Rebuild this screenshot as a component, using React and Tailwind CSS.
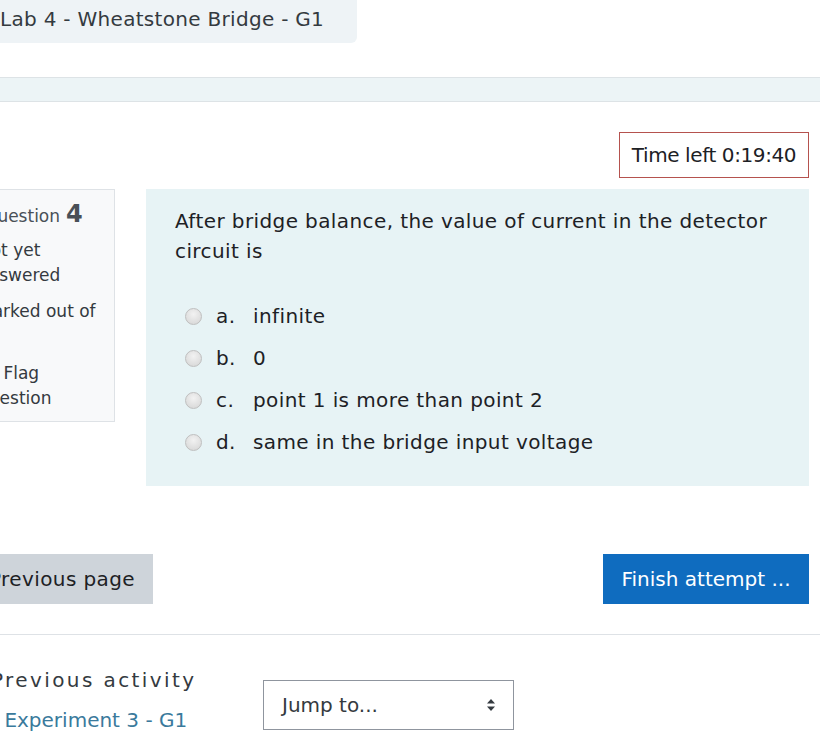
import React from "react";

function Radio() {
  return (
    <span className="inline-block w-[17px] h-[17px] rounded-full border border-[#bfbfbf] bg-[radial-gradient(circle_at_50%_35%,#f2f2f2,#d4d4d4)] shrink-0" />
  );
}

function Option({ letter, text }) {
  return (
    <div className="h-[42px] flex items-center">
      <div className="w-[10px] shrink-0" />
      <Radio />
      <span className="ml-[14px] w-[37px] shrink-0">{letter}</span>
      <span>{text}</span>
    </div>
  );
}

export default function App() {
  return (
    <div className="w-[820px] h-[742px] overflow-hidden bg-white text-[#1d2125] font-['DejaVu_Sans',sans-serif] text-[20px] leading-[30px]">
      {/* Title tab */}
      <div className="ml-[-24px] w-[381px] h-[43px] bg-[#eef3f6] rounded-br-[6px] flex items-center pl-[24px] text-[#343a40] tracking-[0.015em]">
        <span className="mt-[-5px]">Lab 4 - Wheatstone Bridge - G1</span>
      </div>

      {/* band */}
      <div className="mt-[34px] h-[25px] bg-[#ecf4f6] border-y border-[#dde3e6]" />

      {/* timer */}
      <div className="flex justify-end pr-[11px] mt-[30px]">
        <div className="h-[46px] w-[190px] border border-[#b5524e] flex items-center justify-center tracking-[-0.02em]">
          Time left 0:19:40
        </div>
      </div>

      {/* question row */}
      <div className="flex items-start mt-[11px] ml-[-30px]">
        <div className="w-[145px] h-[233px] shrink-0 bg-[#f8f9fa] border border-[#dee2e6] pl-[7px] pr-[4px] pt-[12px] text-[17px] leading-[25px] text-[#343a40]">
          <div className="flex items-baseline pl-[6px]">
            <span className="text-[#495057]">Question</span>
            <span className="ml-[6px] text-[24px] font-bold text-[#495057]">4</span>
          </div>
          <div className="mt-[9px]">
            Not yet
            <br />
            answered
          </div>
          <div className="mt-[11px]">
            Marked out of
            <br />
            &nbsp;
          </div>
          <div className="mt-[12px]">
            <span className="inline-block w-[20px]" /> Flag
            <br />
            question
          </div>
        </div>

        <div className="ml-[31px] w-[663px] bg-[#e7f3f5] pl-[29px] pr-[20px] pt-[17px] pb-[23px] tracking-[0.02em]">
          <div>After bridge balance, the value of current in the detector circuit is</div>
          <div className="mt-[29px]">
            <Option letter="a." text="infinite" />
            <Option letter="b." text="0" />
            <Option letter="c." text="point 1 is more than point 2" />
            <Option letter="d." text="same in the bridge input voltage" />
          </div>
        </div>
      </div>

      {/* buttons */}
      <div className="flex justify-between items-center mt-[68px] ml-[-31px] pr-[11px]">
        <div className="h-[50px] bg-[#ced4da] flex items-center pl-[20px] pr-[18px] tracking-[0.02em]">Previous page</div>
        <div className="h-[50px] w-[206px] bg-[#0f6cbf] text-white flex items-center justify-center">Finish attempt ...</div>
      </div>

      <div className="mt-[30px] border-t border-[#dee2e6]" />

      {/* bottom nav */}
      <div className="flex items-start mt-[30px]">
        <div className="ml-[-9px] w-[272px] shrink-0">
          <div className="tracking-[0.12em] text-[#343a40]">Previous activity</div>
          <div className="mt-[10px] text-[#3a7a9c] ml-[-8px]">
            <span className="mr-[6px]">◄</span>Experiment 3 - G1
          </div>
        </div>
        <div className="mt-[15px] w-[251px] h-[50px] border border-[#8f959e] flex items-center justify-between pl-[18px] pr-[17px] text-[#343a40]">
          <span>Jump to...</span>
          <svg width="10" height="14" viewBox="0 0 10 14">
            <path d="M5 1 L9 5.5 H1 Z" fill="#343a40" />
            <path d="M5 13 L9 8.5 H1 Z" fill="#343a40" />
          </svg>
        </div>
      </div>
    </div>
  );
}
